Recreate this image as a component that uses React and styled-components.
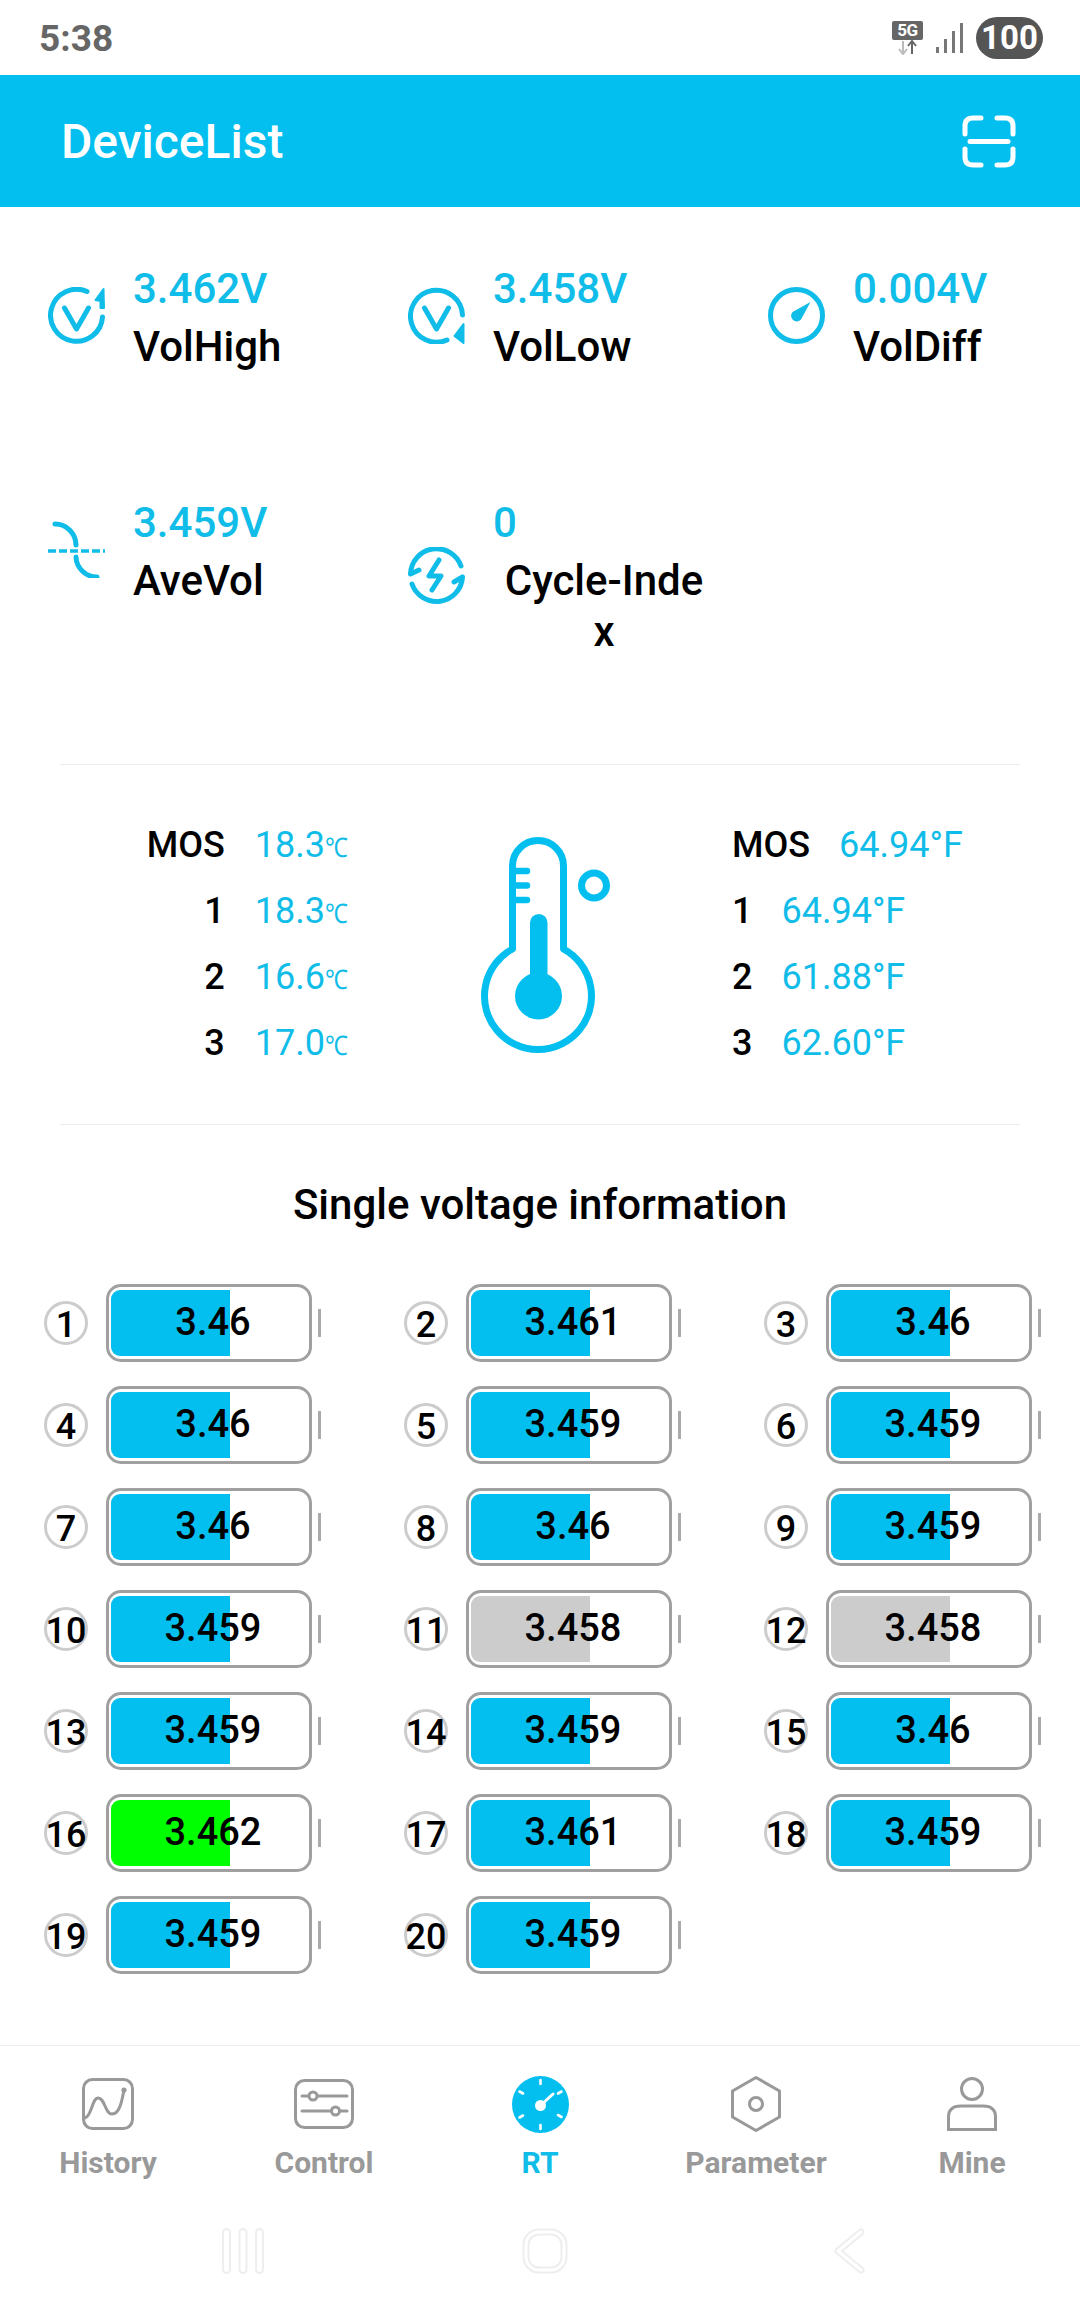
import React from 'react';
import styled, { createGlobalStyle } from 'styled-components';

const CYAN = '#03bff0';
const TEXT_CYAN = '#10bce8';

const GlobalStyle = createGlobalStyle`
  html, body {
    margin: 0;
    padding: 0;
    background: #fff;
  }
  body {
    font-family: Roboto, "Liberation Sans", sans-serif;
    color: #000;
  }
`;

const stats = [
  { value: '3.462V', label: 'VolHigh', icon: 'high' },
  { value: '3.458V', label: 'VolLow', icon: 'low' },
  { value: '0.004V', label: 'VolDiff', icon: 'diff' },
  { value: '3.459V', label: 'AveVol', icon: 'ave' },
  { value: '0', label: 'Cycle-Index', icon: 'cycle', wrap: true },
];

const temps = [
  { name: 'MOS', c: '18.3', f: '64.94°F' },
  { name: '1', c: '18.3', f: '64.94°F' },
  { name: '2', c: '16.6', f: '61.88°F' },
  { name: '3', c: '17.0', f: '62.60°F' },
];

const cells = [
  '3.46', '3.461', '3.46', '3.46', '3.459', '3.459', '3.46', '3.46', '3.459', '3.459',
  '3.458', '3.458', '3.459', '3.459', '3.46', '3.462', '3.461', '3.459', '3.459', '3.459',
];

const fillColor = (v) => {
  if (v === '3.462') return '#00ff00';
  if (v === '3.458') return '#cccccc';
  return CYAN;
};

const StatIcon = ({ type }) => {
  const line = {
    fill: 'none',
    stroke: TEXT_CYAN,
    strokeWidth: 5,
    strokeLinecap: 'round',
    strokeLinejoin: 'round',
  };
  return (
    <StatSvg viewBox="0 0 57 57">
      {type === 'high' && (
        <>
          <path {...line} d="M39 4.500A26 26 0 1 0 54.500 30" />
          <path {...line} d="M16.500 21l12 21L40.500 21" />
          <path fill={TEXT_CYAN} stroke={TEXT_CYAN} strokeWidth="2" strokeLinejoin="round" d="M55.500 2L47.500 13l5 1v7l3.500 0Z" />
        </>
      )}
      {type === 'low' && (
        <>
          <path {...line} d="M39 53A26 26 0 1 1 54.500 28" />
          <path {...line} d="M16.500 21l12 21L40.500 21" />
          <path fill={TEXT_CYAN} stroke={TEXT_CYAN} strokeWidth="2" strokeLinejoin="round" d="M55.500 37L46.500 49l9 7Z" />
        </>
      )}
      {type === 'diff' && (
        <>
          <circle {...line} cx="28.5" cy="28.5" r="26" />
          <path fill={TEXT_CYAN} d="M42.500 15L33 32.500A5.600 5.600 0 1 1 24.500 25Z" />
        </>
      )}
      {type === 'ave' && (
        <>
          <path {...line} d="M7 3A21 21 0 0 1 28 24M28 36A21 21 0 0 0 49 56" />
          <path fill="none" stroke={TEXT_CYAN} strokeWidth="3.6" strokeDasharray="8 3" d="M0 30H57" />
        </>
      )}
      {type === 'cycle' && (
        <>
          <path {...line} d="M2.500 27A26 26 0 0 1 53 19M2.500 27L11 23" />
          <path {...line} d="M54.500 30A26 26 0 0 1 4 37M54.500 30L46 35" />
          <path {...line} d="M31 13L21 29H33L24 43" />
        </>
      )}
    </StatSvg>
  );
};

const TabIcon = ({ name }) => {
  const line = {
    fill: 'none',
    stroke: '#999',
    strokeWidth: 3,
    strokeLinecap: 'round',
    strokeLinejoin: 'round',
  };
  if (name === 'History') {
    return (
      <svg width="52" height="52" viewBox="0 0 52 52">
        <rect {...line} x="1.5" y="1.5" width="49" height="49" rx="9" />
        <path {...line} d="M3 40C10 38 10 20 16 20C23 20 23 36 30 36C38 36 40 22 42 12" />
        <circle cx="42" cy="12" r="2.6" fill="#999" />
      </svg>
    );
  }
  if (name === 'Control') {
    return (
      <svg width="60" height="50" viewBox="0 0 60 50">
        <rect {...line} x="1.5" y="1.5" width="57" height="47" rx="9" />
        <path {...line} d="M8 17H53M8 32H53" />
        <circle {...line} fill="#fff" cx="19" cy="17" r="4" />
        <circle {...line} fill="#fff" cx="41.5" cy="32" r="4" />
      </svg>
    );
  }
  if (name === 'RT') {
    return (
      <svg width="57" height="57" viewBox="0 0 57 57">
        <circle cx="28.5" cy="28.5" r="28.5" fill={CYAN} />
        <path
          stroke="#fff"
          strokeWidth="2.6"
          strokeLinecap="round"
          fill="none"
          d="M28.500 4V8M28.500 49V53M7.500 15.500L11 17.500M46 39L49.500 41M7.500 41.500L11 39.500M46 17.500L49.500 15.500"
        />
        <path stroke="#fff" strokeWidth="3" strokeLinecap="round" d="M29 29L41 18" />
        <circle cx="28.5" cy="29.5" r="5.5" fill="#fff" />
      </svg>
    );
  }
  if (name === 'Parameter') {
    return (
      <svg width="50" height="56" viewBox="0 0 50 56">
        <path {...line} d="M25 1.500L48.500 15V41L25 54.500L1.500 41V15Z" />
        <circle {...line} cx="25" cy="28" r="6.5" />
      </svg>
    );
  }
  return (
    <svg width="50" height="54" viewBox="0 0 50 54">
      <circle {...line} cx="25" cy="12" r="10.5" />
      <path {...line} strokeLinejoin="miter" d="M1.500 52.500V40Q1.500 29 14 29H36Q48.500 29 48.500 40V52.500Z" />
    </svg>
  );
};

const tabs = ['History', 'Control', 'RT', 'Parameter', 'Mine'];

const App = () => {
  return (
    <Page>
      <GlobalStyle />
      <StatusBar>
        <Clock>5:38</Clock>
        <StatusRight>
          <NetworkBox>
            <NetworkBadge>5G</NetworkBadge>
            <svg width="31" height="15" viewBox="0 0 31 15">
              <path d="M11 1V13M7 9l4 5 4-5" fill="none" stroke="#bbb" strokeWidth="2" />
              <path d="M20 14V2M16 6l4-5 4 5" fill="none" stroke="#666" strokeWidth="2" />
            </svg>
          </NetworkBox>
          <svg width="27" height="30" viewBox="0 0 27 30">
            <path d="M1.500 30V24M9.500 30V16M17.500 30V8M25.500 30V0" stroke="#777" strokeWidth="3" fill="none" />
          </svg>
          <BatteryPill>100</BatteryPill>
        </StatusRight>
      </StatusBar>

      <Header>
        <HeaderTitle>DeviceList</HeaderTitle>
        <svg width="54" height="53" viewBox="0 0 54 53">
          <path
            fill="none"
            stroke="#fff"
            strokeWidth="5"
            strokeLinecap="round"
            d="M3 19V11Q3 3 11 3H19M35 3H43Q51 3 51 11V19M3 34V42Q3 50 11 50H19M35 50H43Q51 50 51 42V34M8 26.500H46"
          />
        </svg>
      </Header>

      <Main>
        <StatsGrid>
          {stats.map(({ value, label, icon, wrap }) => (
            <Stat key={label}>
              <StatIcon type={icon} />
              <div>
                <StatValue>{value}</StatValue>
                <StatLabel $wrap={wrap}>{label}</StatLabel>
              </div>
            </Stat>
          ))}
        </StatsGrid>

        <Divider />

        <TempSection>
          <TempTable $side="left">
            {temps.map(({ name, c }) => (
              <TempRow key={name} $side="left">
                <TempName>{name}</TempName>
                <TempValue>
                  {c}
                  <Celsius>℃</Celsius>
                </TempValue>
              </TempRow>
            ))}
          </TempTable>
          <Thermometer viewBox="0 0 129 215">
            <path
              fill="none"
              stroke={CYAN}
              strokeWidth="7"
              strokeLinejoin="round"
              d="M31.500 112V29A25.500 25.500 0 0 1 82.500 29V112A53.500 53.500 0 1 1 31.500 112Z"
            />
            <path stroke={CYAN} strokeWidth="6.5" strokeLinecap="round" d="M33 34H46M33 48.500H46M33 63H46" />
            <rect x="49" y="77" width="17.5" height="70" rx="8.7" fill={CYAN} />
            <circle cx="57.5" cy="159" r="23.5" fill={CYAN} />
            <circle cx="113" cy="48.5" r="12.5" fill="none" stroke={CYAN} strokeWidth="7" />
          </Thermometer>
          <TempTable $side="right">
            {temps.map(({ name, f }) => (
              <TempRow key={name} $side="right">
                <TempName>{name}</TempName>
                <TempValue>{f}</TempValue>
              </TempRow>
            ))}
          </TempTable>
        </TempSection>

        <Divider />

        <SectionTitle>Single voltage information</SectionTitle>

        <BatteryGrid>
          {cells.map((v, i) => (
            <BatteryCell key={i}>
              <CellIndex>{i + 1}</CellIndex>
              <BatteryBody>
                <BatteryFill $color={fillColor(v)} />
                <BatteryText>{v}</BatteryText>
              </BatteryBody>
              <BatteryNub />
            </BatteryCell>
          ))}
        </BatteryGrid>
      </Main>

      <TabBar>
        {tabs.map((name) => (
          <Tab key={name}>
            <TabIconBox>
              <TabIcon name={name} />
            </TabIconBox>
            <TabLabel $active={name === 'RT'}>{name}</TabLabel>
          </Tab>
        ))}
      </TabBar>

      <SystemNav>
        <svg width="42" height="46" viewBox="0 0 42 46">
          <g fill="#fff" stroke="#eee" strokeWidth="2">
            <rect x="1" y="1" width="7" height="44" rx="3.5" />
            <rect x="17.5" y="1" width="7" height="44" rx="3.5" />
            <rect x="34" y="1" width="7" height="44" rx="3.5" />
          </g>
        </svg>
        <svg width="46" height="46" viewBox="0 0 46 46">
          <rect x="4" y="4" width="38" height="38" rx="13" fill="none" stroke="#eee" strokeWidth="7" />
          <rect x="4" y="4" width="38" height="38" rx="13" fill="none" stroke="#fff" strokeWidth="3" />
        </svg>
        <svg width="32" height="46" viewBox="0 0 32 46">
          <path d="M28 4L5 23L28 42" fill="none" stroke="#eee" strokeWidth="7" strokeLinecap="round" strokeLinejoin="round" />
          <path d="M28 4L5 23L28 42" fill="none" stroke="#fff" strokeWidth="3" strokeLinecap="round" strokeLinejoin="round" />
        </svg>
      </SystemNav>
    </Page>
  );
};

const Page = styled.div`
  width: 1080px;
  height: 2316px;
  display: flex;
  flex-direction: column;
  overflow: hidden;
  background: #fff;
`;

const StatusBar = styled.div`
  height: 75px;
  flex: none;
  box-sizing: border-box;
  padding: 0 37px 0 39px;
  display: flex;
  align-items: center;
  justify-content: space-between;
`;

const Clock = styled.span`
  font-size: 37px;
  font-weight: 700;
  color: #666;
  margin-top: 2px;
`;

const StatusRight = styled.div`
  display: flex;
  align-items: center;
  gap: 13px;
`;

const NetworkBox = styled.div`
  display: flex;
  flex-direction: column;
  width: 31px;
`;

const NetworkBadge = styled.span`
  height: 19px;
  background: #666;
  color: #fff;
  border-radius: 2px;
  font-size: 17px;
  letter-spacing: -0.5px;
  font-weight: 700;
  line-height: 19px;
  text-align: center;
`;

const BatteryPill = styled.span`
  width: 67px;
  height: 42px;
  border-radius: 21px;
  background: #555;
  color: #fff;
  font-size: 33px;
  font-weight: 700;
  line-height: 42px;
  text-align: center;
`;

const Header = styled.header`
  height: 132px;
  flex: none;
  box-sizing: border-box;
  padding: 0 64px 0 61px;
  background: ${CYAN};
  display: flex;
  align-items: center;
  justify-content: space-between;
`;

const HeaderTitle = styled.h1`
  margin: 0;
  font-size: 48px;
  font-weight: 500;
  color: #fff;
`;

const Main = styled.main`
  flex: 1;
`;

const StatsGrid = styled.section`
  display: grid;
  grid-template-columns: repeat(3, 360px);
  align-items: start;
  row-gap: 126px;
  padding: 57px 0 107px 48px;
`;

const Stat = styled.div`
  display: flex;
  align-items: center;
  gap: 28px;
`;

const StatSvg = styled.svg`
  width: 57px;
  height: 57px;
  flex: none;
  margin-top: -5px;
`;

const StatValue = styled.div`
  font-size: 42px;
  line-height: 50px;
  margin-bottom: 7px;
  font-weight: 500;
  color: ${TEXT_CYAN};
`;

const StatLabel = styled.div`
  font-size: 42px;
  line-height: 51px;
  font-weight: 500;
  ${({ $wrap }) =>
    $wrap &&
    `
    width: 214px;
    margin-left: 4px;
    text-align: center;
    word-break: break-all;
  `}
`;

const Divider = styled.hr`
  margin: 0 60px;
  height: 1px;
  border: 0;
  background: #eeeeee;
`;

const TempSection = styled.section`
  display: flex;
  align-items: center;
  padding: 47px 0 48px;
`;

const TempTable = styled.div`
  flex: none;
  width: ${({ $side }) => ($side === 'left' ? '347px' : 'auto')};
  margin-left: ${({ $side }) => ($side === 'left' ? '0' : '122px')};
`;

const TempRow = styled.div`
  display: flex;
  justify-content: ${({ $side }) => ($side === 'left' ? 'flex-end' : 'flex-start')};
  gap: ${({ $side }) => ($side === 'left' ? '30px' : '29px')};
  font-size: 36px;
  line-height: 66px;
  height: 66px;
`;

const TempName = styled.span`
  font-weight: 500;
`;

const TempValue = styled.span`
  color: ${TEXT_CYAN};
`;

const Celsius = styled.span`
  display: inline-block;
  width: 22px;
  height: 40px;
  line-height: 40px;
  font-size: 27px;
  white-space: nowrap;
  transform: scaleX(0.85);
  transform-origin: left center;
`;

const Thermometer = styled.svg`
  flex: none;
  width: 129px;
  height: 215px;
  margin-left: 134px;
  overflow: visible;
`;

const SectionTitle = styled.h2`
  margin: 50px 0 49px;
  font-size: 42px;
  line-height: 60px;
  font-weight: 500;
  text-align: center;
`;

const BatteryGrid = styled.section`
  display: grid;
  grid-template-columns: repeat(3, 360px);
  row-gap: 24px;
  padding-left: 44px;
`;

const BatteryCell = styled.div`
  display: flex;
  align-items: center;
`;

const CellIndex = styled.span`
  width: 44px;
  height: 44px;
  box-sizing: border-box;
  flex: none;
  display: flex;
  align-items: center;
  justify-content: center;
  border: 3px solid #cccccc;
  border-radius: 50%;
  font-size: 36px;
  font-weight: 500;
  line-height: 44px;
  padding-top: 4px;
  margin-right: 18px;
`;

const BatteryBody = styled.div`
  position: relative;
  width: 206px;
  height: 78px;
  box-sizing: border-box;
  flex: none;
  border: 3px solid #a0a0a0;
  border-radius: 15px;
  display: flex;
  align-items: center;
  justify-content: center;
  padding-left: 8px;
`;

const BatteryFill = styled.div`
  position: absolute;
  left: 2px;
  top: 3px;
  bottom: 3px;
  width: 119px;
  border-radius: 9px 0 0 9px;
  background: ${({ $color }) => $color};
`;

const BatteryText = styled.span`
  position: relative;
  font-size: 38px;
  font-weight: 500;
  line-height: 44px;
  margin-top: -3px;
`;

const BatteryNub = styled.i`
  width: 3px;
  height: 28px;
  flex: none;
  margin-left: 6px;
  background: #aaaaaa;
`;

const TabBar = styled.nav`
  flex: none;
  display: grid;
  grid-template-columns: repeat(5, 216px);
  border-top: 1px solid #eeeeee;
  padding-top: 28px;
`;

const Tab = styled.div`
  display: flex;
  flex-direction: column;
  align-items: center;
`;

const TabIconBox = styled.div`
  height: 60px;
  display: flex;
  align-items: center;
`;

const TabLabel = styled.span`
  margin-top: 9px;
  font-size: 30px;
  line-height: 40px;
  font-weight: 700;
  color: ${({ $active }) => ($active ? TEXT_CYAN : '#999999')};
`;

const SystemNav = styled.div`
  flex: none;
  height: 133px;
  box-sizing: border-box;
  padding: 45px 0 0 222px;
  display: flex;
  gap: 258px;
  align-items: flex-start;

  & > svg:last-child {
    margin-left: 7px;
  }
`;

export default App;
